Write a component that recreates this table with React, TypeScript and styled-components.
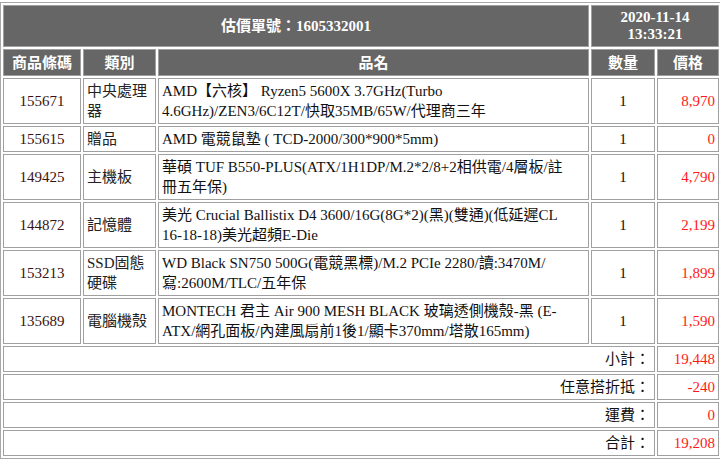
import React, { FC } from "react";
import styled, { createGlobalStyle } from "styled-components";

interface Item {
  code: string;
  category: string;
  name: string;
  qty: number;
  price: string;
}

const items: Item[] = [
  {
    code: "155671",
    category: "中央處理器",
    name: "AMD【六核】 Ryzen5 5600X 3.7GHz(Turbo 4.6GHz)/ZEN3/6C12T/快取35MB/65W/代理商三年",
    qty: 1,
    price: "8,970",
  },
  {
    code: "155615",
    category: "贈品",
    name: "AMD 電競鼠墊 ( TCD-2000/300*900*5mm)",
    qty: 1,
    price: "0",
  },
  {
    code: "149425",
    category: "主機板",
    name: "華碩 TUF B550-PLUS(ATX/1H1DP/M.2*2/8+2相供電/4層板/註冊五年保)",
    qty: 1,
    price: "4,790",
  },
  {
    code: "144872",
    category: "記憶體",
    name: "美光 Crucial Ballistix D4 3600/16G(8G*2)(黑)(雙通)(低延遲CL 16-18-18)美光超頻E-Die",
    qty: 1,
    price: "2,199",
  },
  {
    code: "153213",
    category: "SSD固態硬碟",
    name: "WD Black SN750 500G(電競黑標)/M.2 PCIe 2280/讀:3470M/寫:2600M/TLC/五年保",
    qty: 1,
    price: "1,899",
  },
  {
    code: "135689",
    category: "電腦機殼",
    name: "MONTECH 君主 Air 900 MESH BLACK 玻璃透側機殼-黑 (E-ATX/網孔面板/內建風扇前1後1/顯卡370mm/塔散165mm)",
    qty: 1,
    price: "1,590",
  },
];

const totals = [
  { label: "小計：", value: "19,448" },
  { label: "任意搭折抵：", value: "-240" },
  { label: "運費：", value: "0" },
  { label: "合計：", value: "19,208" },
];

const GlobalStyle = createGlobalStyle`
  body {
    margin: 0;
    background: #fff;
    font-family: "Liberation Serif", "Noto Sans CJK TC", serif;
    font-size: 15px;
  }
`;

const QuoteTable = styled.table`
  width: 721px;
  margin-top: 2px;
  table-layout: fixed;
  border-collapse: separate;
  border-spacing: 2px;
  border: 1px solid #a8a8a8;
  border-right: none;
`;

const HeadCell = styled.th<{ $tall?: boolean }>`
  background: #666;
  color: #fff;
  font-weight: bold;
  text-align: center;
  border: 1px solid #a0a0a0;
  padding: ${(p) => (p.$tall ? "3px 2px" : "3px 2px 2px")};
  line-height: ${(p) => (p.$tall ? "17px" : "20px")};
`;

const Cell = styled.td<{ $align?: "left" | "center" | "right"; $red?: boolean }>`
  border: 1px solid #a0a0a0;
  padding: 2px 3px;
  line-height: 20px;
  text-align: ${(p) => p.$align || "left"};
  color: ${(p) => (p.$red ? "#ff1a1a" : "#111")};
  vertical-align: middle;
  word-break: break-word;
`;

const CodeCell = styled(Cell)`
  text-align: center;
  color: #3a1212;
`;

const CategoryCell = styled(Cell)`
  color: #222;
`;

const NameCell = styled(Cell)`
  padding-right: 12px;
`;

const SumLabel = styled.td`
  border: 1px solid #a0a0a0;
  padding: 2px 4px 2px 3px;
  line-height: 20px;
  text-align: right;
  color: #111;
`;

const SumValue = styled(SumLabel)`
  color: #ff1a1a;
  padding-right: 3px;
`;

const App: FC = () => {
  return (
    <>
      <GlobalStyle />
      <QuoteTable>
        <colgroup>
          <col style={{ width: 78 }} />
          <col style={{ width: 73 }} />
          <col style={{ width: 431 }} />
          <col style={{ width: 64 }} />
          <col style={{ width: 62 }} />
        </colgroup>
        <thead>
          <tr>
            <HeadCell colSpan={3} $tall>
              估價單號：1605332001
            </HeadCell>
            <HeadCell colSpan={2} $tall>
              2020-11-14
              <br />
              13:33:21
            </HeadCell>
          </tr>
          <tr>
            <HeadCell>商品條碼</HeadCell>
            <HeadCell>類別</HeadCell>
            <HeadCell>品名</HeadCell>
            <HeadCell>數量</HeadCell>
            <HeadCell>價格</HeadCell>
          </tr>
        </thead>
        <tbody>
          {items.map((item) => (
            <tr key={item.code}>
              <CodeCell>{item.code}</CodeCell>
              <CategoryCell>{item.category}</CategoryCell>
              <NameCell>{item.name}</NameCell>
              <Cell $align="center">{item.qty}</Cell>
              <Cell $align="right" $red>
                {item.price}
              </Cell>
            </tr>
          ))}
          {totals.map((row) => (
            <tr key={row.label}>
              <SumLabel colSpan={4}>{row.label}</SumLabel>
              <SumValue>{row.value}</SumValue>
            </tr>
          ))}
        </tbody>
      </QuoteTable>
    </>
  );
};

export default App;
